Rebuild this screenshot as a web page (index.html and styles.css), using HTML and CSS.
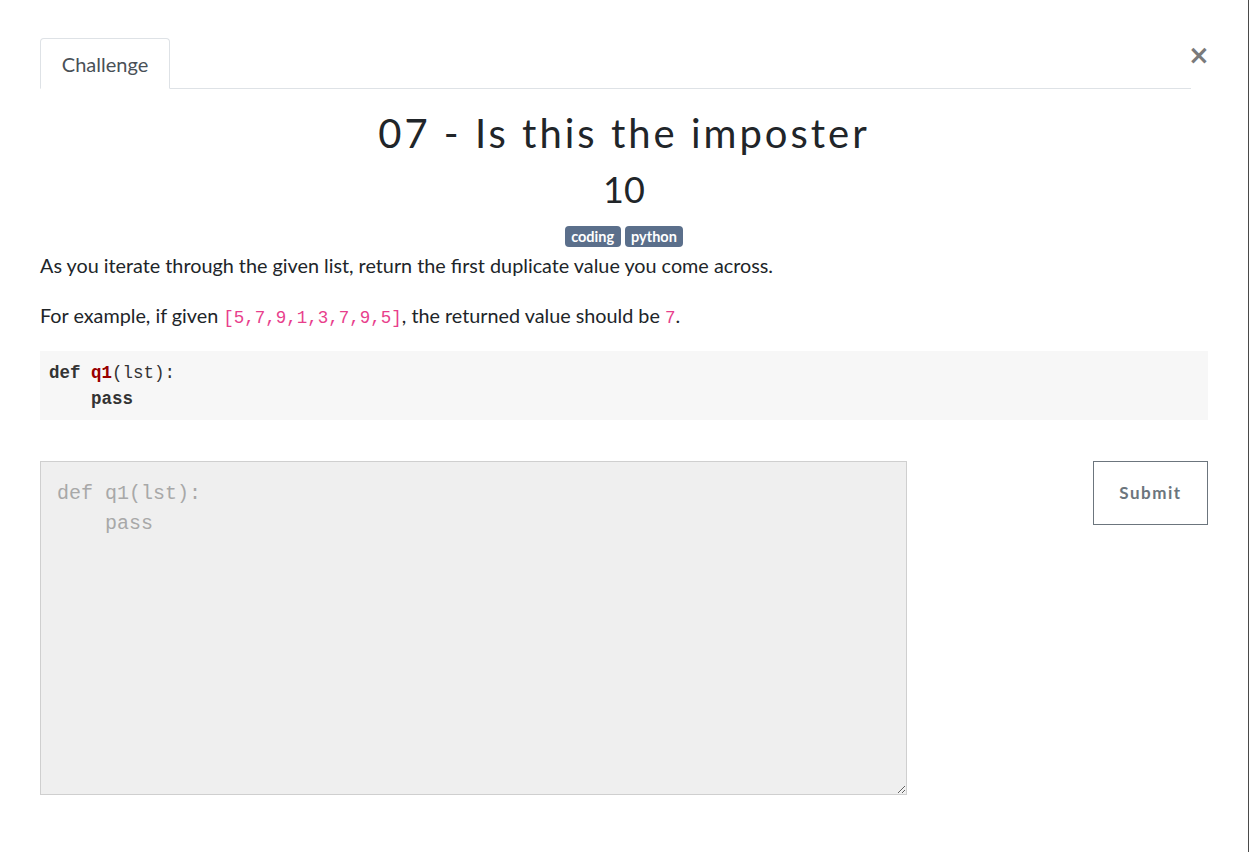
FILE: index.html
```html
<!DOCTYPE html>
<html lang="en">
<head>
<meta charset="utf-8">
<title>Challenge</title>
<link rel="stylesheet" href="styles.css">
</head>
<body>
<div class="modal">
  <div class="header-row">
    <ul class="nav-tabs">
      <li class="tab">Challenge</li>
    </ul>
    <button class="close" type="button"><span class="close-glyph">&times;</span></button>
  </div>
  <h1 class="title">07 - Is this the imposter</h1>
  <h3 class="value">10</h3>
  <div class="tags">
    <span class="badge">coding</span>
    <span class="badge">python</span>
  </div>
  <p class="desc">As you iterate through the given list, return the first duplicate value you come across.</p>
  <p class="desc second">For example, if given <code class="inline">[5,7,9,1,3,7,9,5]</code>, the returned value should be <code class="inline">7</code>.</p>
  <pre class="codeblock"><span class="k">def</span> <span class="nf">q1</span>(lst):
    <span class="k">pass</span></pre>
  <div class="submit-row">
    <textarea class="answer" placeholder="def q1(lst):
    pass"></textarea>
    <button class="submit" type="button">Submit</button>
  </div>
</div>
</body>
</html>
```

FILE: styles.css
```css
html, body {
  margin: 0;
  padding: 0;
}
body {
  background: #4a4a4a;
  font-family: Lato, "Liberation Sans", sans-serif;
  color: #212529;
  width: 1249px;
  height: 852px;
  overflow: hidden;
}
.modal {
  width: 1248px;
  height: 852px;
  background: #ffffff;
  box-sizing: border-box;
  padding: 38px 40px 0 40px;
}
.header-row {
  display: flex;
  align-items: flex-start;
}
.nav-tabs {
  flex: 1;
  display: flex;
  margin: 0;
  padding: 0;
  list-style: none;
  border-bottom: 1px solid #dee2e6;
}
.tab {
  margin-bottom: -1px;
  height: 51px;
  box-sizing: border-box;
  width: 130px;
  border: 1px solid #dee2e6;
  border-bottom: 1px solid #ffffff;
  border-radius: 4px 4px 0 0;
  background: #fff;
  color: #495057;
  font-size: 20px;
  line-height: 51px;
  text-align: center;
}
.close {
  display: flex;
  justify-content: flex-start;
  width: 17px;
  padding: 0;
  margin: 0;
  border: 0;
  background: transparent;
  color: #7a7a7a;
  font-family: "DejaVu Sans", sans-serif;
  font-weight: bold;
  font-size: 26px;
  line-height: 34px;
  cursor: pointer;
  overflow: visible;
}
.close-glyph {
  margin-left: -3px;
}
.title {
  margin: 20px 0 0 0;
  font-size: 40px;
  line-height: 48px;
  font-weight: 400;
  letter-spacing: 3px;
  text-align: center;
  color: #212529;
}
.value {
  margin: 10px 0 0 0;
  font-size: 36px;
  line-height: 44px;
  font-weight: 400;
  text-align: center;
}
.tags {
  display: flex;
  justify-content: center;
  gap: 4px;
  margin-top: 15px;
}
.badge {
  display: inline-block;
  background: #5b6f8b;
  color: #fff;
  font-weight: bold;
  font-size: 14.5px;
  line-height: 21px;
  height: 21px;
  padding: 0 6.5px;
  border-radius: 4px;
}
.desc {
  margin: 6px 0 0 0;
  font-size: 19.8px;
  line-height: 24px;
}
.desc.second {
  margin-top: 26px;
}
.inline {
  font-family: "Liberation Mono", monospace;
  color: #e83e8c;
  font-size: 17.5px;
  line-height: 1;
}
.codeblock {
  margin: 23px 0 0 0;
  background: #f7f7f7;
  padding: 9px 9px 8px 9px;
  font-family: "Liberation Mono", monospace;
  font-size: 17.5px;
  line-height: 26px;
  color: #333;
}
.k {
  font-weight: bold;
}
.nf {
  font-weight: bold;
  color: #990000;
}
.submit-row {
  display: flex;
  justify-content: space-between;
  align-items: flex-start;
  margin-top: 41px;
}
.answer {
  width: 867px;
  height: 334px;
  box-sizing: border-box;
  margin: 0;
  padding: 17px 16px 15px 16px;
  background: #efefef;
  border: 1px solid #cfcfcf;
  border-radius: 0;
  font-family: "Liberation Mono", monospace;
  font-size: 20px;
  line-height: 30px;
  color: #333;
  resize: both;
}
.answer::placeholder {
  color: #a8a8a8;
  opacity: 1;
}
.submit {
  width: 115px;
  height: 64px;
  box-sizing: border-box;
  background: #fff;
  border: 1px solid #6c757d;
  border-radius: 0;
  color: #6c757d;
  font-family: Lato, sans-serif;
  font-weight: bold;
  font-size: 17px;
  letter-spacing: 1.5px;
  margin: 0;
  padding: 0;
}
```
